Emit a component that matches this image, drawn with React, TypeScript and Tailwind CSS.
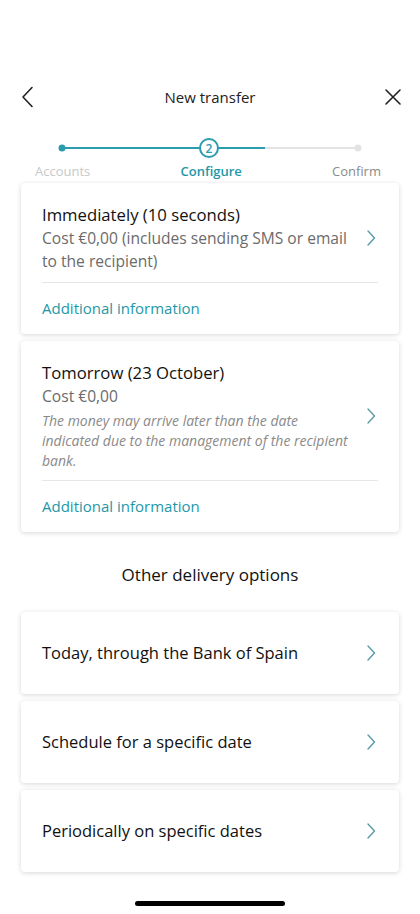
import { ReactNode } from "react";

const TEAL = "#1e98a8";

function Chevron({ className = "" }: { className?: string }) {
  return (
    <svg width="10" height="18" viewBox="0 0 10 18" className={className} fill="none">
      <path d="M2 2l6.5 7L2 16" stroke="#5a9ba5" strokeWidth="1.4" strokeLinecap="round" strokeLinejoin="round" />
    </svg>
  );
}

function Header() {
  return (
    <div className="flex h-[30px] items-center justify-between pl-[20px] pr-[18px]">
      <svg width="16" height="22" viewBox="0 0 16 22" fill="none">
        <path d="M12 1.5L3 11l9 9.5" stroke="#222" strokeWidth="1.6" strokeLinecap="round" strokeLinejoin="round" />
      </svg>
      <span className="text-[15px] text-[#222]">New transfer</span>
      <svg width="18" height="18" viewBox="0 0 18 18" fill="none">
        <path d="M2 2l14 14M16 2L2 16" stroke="#222" strokeWidth="1.6" strokeLinecap="round" />
      </svg>
    </div>
  );
}

function Stepper() {
  return (
    <div className="mt-[25px]">
      <svg width="420" height="22" viewBox="0 0 420 22" className="block">
        <line x1="62" y1="11" x2="358" y2="11" stroke="#e3e3e3" strokeWidth="2" />
        <line x1="62" y1="11" x2="265" y2="11" stroke="#2a9cae" strokeWidth="2" />
        <circle cx="62" cy="11" r="3.5" fill="#2a9cae" />
        <circle cx="358" cy="11" r="3.5" fill="#e3e3e3" />
        <circle cx="209" cy="11" r="9" fill="#fff" stroke="#2a9cae" strokeWidth="2" />
        <text x="209" y="15.5" textAnchor="middle" fontSize="12" fontWeight="600" fill="#2a9cae" fontFamily="'Open Sans', sans-serif">
          2
        </text>
      </svg>
      <div className="mt-[3px] flex justify-between pl-[35px] pr-[39px] text-[13px] leading-[18px]">
        <span className="text-[#c8c8c8]">Accounts</span>
        <span className="font-semibold" style={{ color: TEAL }}>
          Configure
        </span>
        <span className="text-[#8a8a8a]">Confirm</span>
      </div>
    </div>
  );
}

function Card({ children, className = "" }: { children: ReactNode; className?: string }) {
  return (
    <div className={"mx-[21px] rounded-[4px] bg-white shadow-[0_1px_5px_rgba(0,0,0,0.16)] " + className}>{children}</div>
  );
}

function OptionCard({ title, children }: { title: string; children: ReactNode }) {
  return (
    <Card className="px-[21px] pt-[19px] pb-[14px]">
      <div className="flex items-center">
        <div className="flex-1">
          <div className="text-[16.7px] leading-[25px] text-[#111]">{title}</div>
          {children}
        </div>
        <Chevron className="ml-[10px] mr-[2px]" />
      </div>
      <div className="mt-[9px] h-px bg-[#e6e6e6]" />
      <div className="pt-[13px] text-[15px] leading-[24px]" style={{ color: TEAL }}>
        Additional information
      </div>
    </Card>
  );
}

function LinkCard({ label }: { label: string }) {
  return (
    <Card className="flex h-[82px] items-center justify-between pl-[21px] pr-[23px]">
      <span className="text-[16.5px] text-[#111]">{label}</span>
      <Chevron />
    </Card>
  );
}

export default function App() {
  return (
    <div className="relative h-[914px] w-[420px] overflow-hidden bg-white pt-[82px]" style={{ fontFamily: "'Open Sans', sans-serif" }}>
      <Header />
      <Stepper />

      <div className="mt-[3px] flex flex-col gap-[7px]">
        <OptionCard title="Immediately (10 seconds)">
          <div className="text-[15.6px] leading-[23px] text-[#6b6b6b]">
            Cost €0,00 (includes sending SMS or email to the recipient)
          </div>
        </OptionCard>

        <OptionCard title="Tomorrow (23 October)">
          <div className="text-[15.6px] leading-[23px] text-[#6b6b6b]">Cost €0,00</div>
          <div className="mt-[3px] text-[14px] italic leading-[20px] text-[#8a8a8a]">
            The money may arrive later than the date indicated due to the management of the recipient bank.
          </div>
        </OptionCard>
      </div>

      <div className="mt-[31px] text-center text-[17px] leading-[24px] text-[#111]">Other delivery options</div>

      <div className="mt-[25px] flex flex-col gap-[7px]">
        <LinkCard label="Today, through the Bank of Spain" />
        <LinkCard label="Schedule for a specific date" />
        <LinkCard label="Periodically on specific dates" />
      </div>

      <div className="absolute bottom-[8px] left-[135px] h-[5px] w-[150px] rounded-full bg-black" />
    </div>
  );
}
